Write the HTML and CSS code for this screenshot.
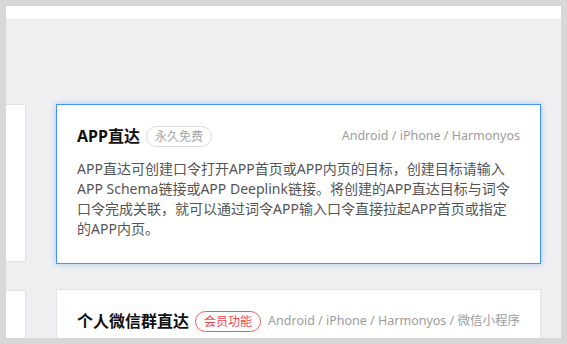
FILE: index.html
```html
<!DOCTYPE html>
<html lang="zh-CN">
<head>
<meta charset="utf-8">
<link rel="stylesheet" href="styles.css">
</head>
<body>
<div class="frame">
  <div class="topbar"></div>
  <div class="content">
    <div class="side">
      <div class="side-card side-card-1"></div>
      <div class="side-card side-card-2"></div>
    </div>
    <div class="main">
      <div class="card card-active">
        <div class="card-head">
          <div class="title-wrap">
            <span class="title">APP直达</span>
            <span class="tag tag-free">永久免费</span>
          </div>
          <span class="platforms">Android / iPhone / Harmonyos</span>
        </div>
        <p class="desc">APP直达可创建口令打开APP首页或APP内页的目标，创建目标请输入APP Schema链接或APP Deeplink链接。将创建的APP直达目标与词令口令完成关联，就可以通过词令APP输入口令直接拉起APP首页或指定的APP内页。</p>
      </div>
      <div class="card">
        <div class="card-head">
          <div class="title-wrap">
            <span class="title">个人微信群直达</span>
            <span class="tag tag-vip">会员功能</span>
          </div>
          <span class="platforms">Android / iPhone / Harmonyos / 微信小程序</span>
        </div>
      </div>
    </div>
  </div>
</div>
</body>
</html>
```

FILE: styles.css
```css
* { box-sizing: border-box; }
html, body { margin: 0; padding: 0; }
body {
  background: #d8d8d8;
  padding: 6px;
  font-family: "Noto Sans", "Noto Sans CJK SC", sans-serif;
}
.frame {
  width: 555px;
  height: 332px;
  overflow: hidden;
  background: #efeff1;
  display: flex;
  flex-direction: column;
}
.topbar {
  height: 14px;
  flex: none;
  background: #fff;
  border-bottom: 1px solid #e9e9eb;
}
.content {
  flex: 1;
  display: flex;
  padding-top: 84px;
  gap: 30px;
}
.side {
  width: 20px;
  flex: none;
  display: flex;
  flex-direction: column;
  gap: 28px;
}
.side-card {
  background: #fff;
  border: 1px solid #e2e2e2;
  border-left: none;
  flex: none;
}
.side-card-1 { height: 158px; }
.side-card-2 { height: 80px; }
.main {
  width: 485px;
  flex: none;
  display: flex;
  flex-direction: column;
  gap: 25px;
}
.card {
  background: #fff;
  border: 1px solid #e4e4e4;
  padding: 20px 20px 24px 20px;
  flex: none;
}
.card-active {
  border-color: #3f95fb;
  box-shadow: 0 0 6px rgba(64, 150, 255, 0.45);
}
.card-head {
  display: flex;
  align-items: center;
  justify-content: space-between;
  height: 22px;
  white-space: nowrap;
}
.title-wrap {
  display: flex;
  align-items: center;
  gap: 6px;
}
.title {
  font-size: 16px;
  font-weight: 700;
  color: #111;
  line-height: 22px;
}
.tag {
  font-size: 12px;
  line-height: 19px;
  height: 21px;
  padding: 0 8px;
  border-radius: 11px;
  border: 1px solid #dcdcdc;
  color: #a8a8a8;
}
.tag-vip {
  border-color: #f0595a;
  color: #f0484a;
}
.platforms {
  font-size: 12.5px;
  color: #9c9c9c;
  line-height: 22px;
}
.desc {
  margin: 12px 0 0 0;
  font-size: 14px;
  line-height: 20px;
  color: #555;
}
```
